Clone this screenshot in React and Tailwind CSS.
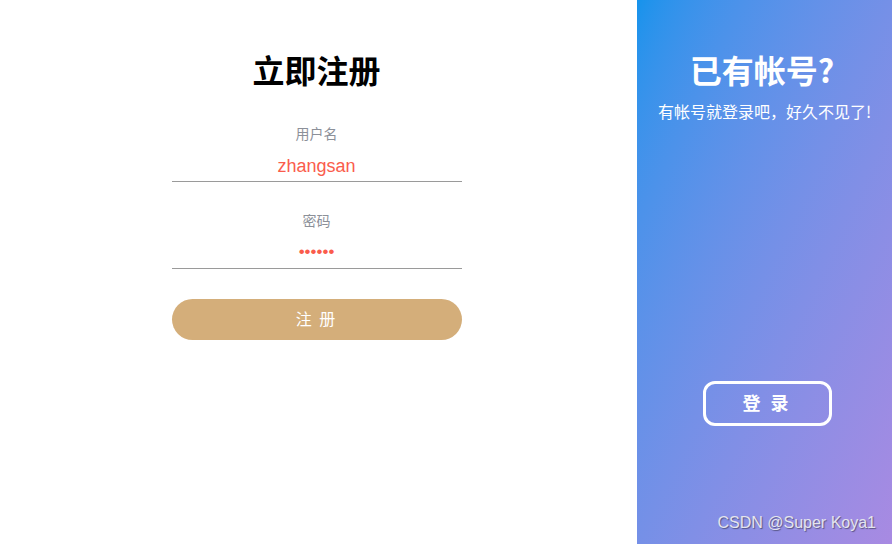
import { useState } from "react";

export default function App() {
  const [username, setUsername] = useState("zhangsan");
  const [password, setPassword] = useState("123456");

  return (
    <div className="flex h-[544px] w-full bg-white font-['Liberation_Sans','Noto_Sans_CJK_SC',sans-serif]">
      {/* Register form */}
      <div className="flex flex-1 flex-col items-center pt-[49px] pr-1">
        <h1 className="text-[32px] font-bold leading-[40px] text-black font-['Noto_Sans_CJK_SC',sans-serif]">
          立即注册
        </h1>

        <div className="mt-[34px] flex w-[290px] flex-col items-center">
          <label className="text-sm leading-5 text-[#8c9099] font-['Noto_Sans_CJK_SC',sans-serif]">
            用户名
          </label>
          <input
            value={username}
            onChange={(e) => setUsername(e.target.value)}
            className="h-[39px] w-full border-b border-[#9a9a9a] bg-transparent pt-[8px] text-center text-[18px] text-[#fa5c4c] outline-none"
          />
        </div>

        <div className="mt-[28px] flex w-[290px] flex-col items-center">
          <label className="text-sm leading-5 text-[#8c9099] font-['Noto_Sans_CJK_SC',sans-serif]">
            密码
          </label>
          <input
            type="password"
            value={password}
            onChange={(e) => setPassword(e.target.value)}
            className="h-[39px] w-full border-b border-[#9a9a9a] bg-transparent pt-[6px] text-center text-[17px] text-[#fa5c4c] outline-none"
          />
        </div>

        <button className="mt-[30px] h-[41px] w-[290px] rounded-full bg-[#d4ae7a] pb-[3px] text-base tracking-[2px] text-white font-['Noto_Sans_CJK_SC',sans-serif]">
          注 册
        </button>
      </div>

      {/* Login side panel */}
      <div className="relative flex w-[255px] flex-col items-center bg-gradient-to-br from-[#1493ec] to-[#a88ae2] pt-[49px] text-white">
        <h2 className="mr-[5px] text-[32px] font-bold leading-[40px] font-['Noto_Sans_CJK_SC',sans-serif]">
          已有帐号?
        </h2>
        <p className="mt-[12px] text-base leading-5 font-['Noto_Sans_CJK_SC',sans-serif]">
          有帐号就登录吧，好久不见了!
        </p>
        <button className="mt-[260px] ml-[5px] h-[45px] w-[129px] rounded-[12px] border-[3px] border-white pb-[2px] text-[18px] font-bold tracking-[3px] font-['Noto_Sans_CJK_SC',sans-serif]">
          登 录
        </button>

        <span className="absolute bottom-[9px] right-[16px] text-base text-[#e4e4ee] [text-shadow:1px_1px_1px_rgba(60,60,90,0.7)]">
          CSDN @Super Koya1
        </span>
      </div>
    </div>
  );
}
